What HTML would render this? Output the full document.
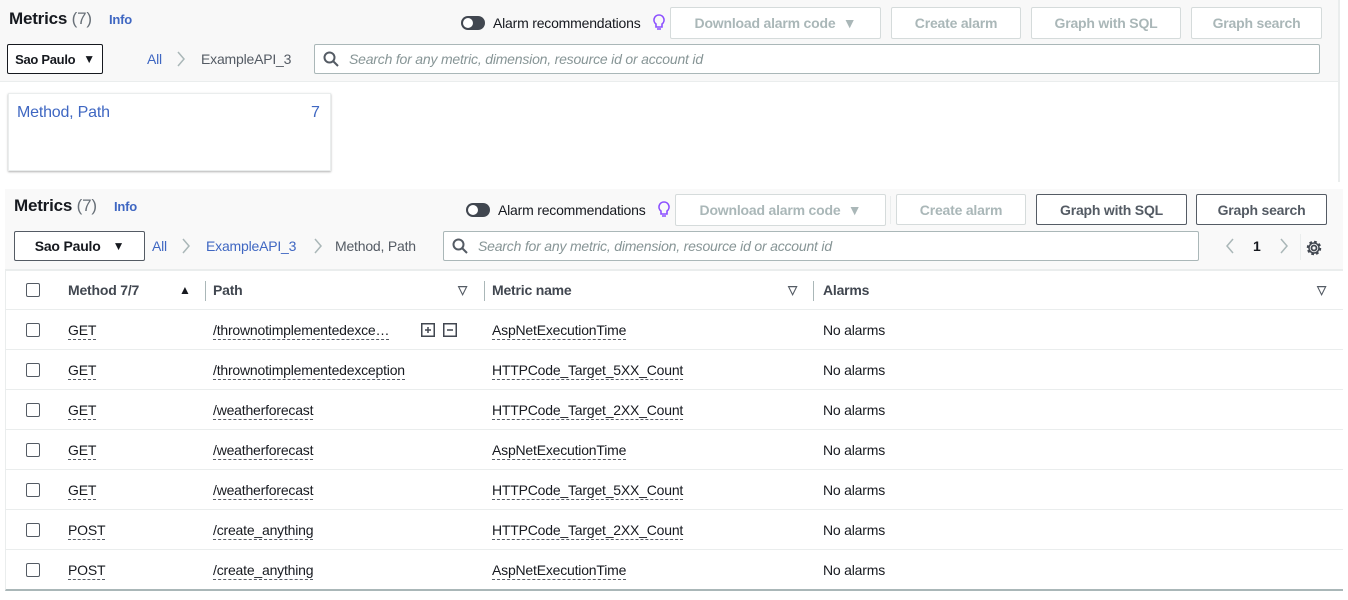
<!DOCTYPE html>
<html><head><meta charset="utf-8"><style>
*{box-sizing:border-box;margin:0;padding:0}
body{width:1348px;height:600px;background:#fff;font-family:"Liberation Sans",sans-serif;font-size:14px;color:#16191f;position:relative;overflow:hidden;letter-spacing:-0.2px}
.a{position:absolute;white-space:nowrap}
.btn{position:absolute;border:1px solid #d5dbdb;border-radius:2px;background:#fff;color:#aab7b8;font-weight:bold;font-size:14px;display:flex;align-items:center;justify-content:center;white-space:nowrap}
.btn.on{border-color:#545b64;color:#545b64}
.sel{position:absolute;border:1px solid #16191f;border-radius:2px;background:#fff;font-weight:bold;display:flex;align-items:center;justify-content:center;gap:12px;color:#16191f;white-space:nowrap}
.search{position:absolute;border:1px solid #aab7b8;border-radius:2px;background:#fff;color:#879596;font-style:italic;display:flex;align-items:center;padding-left:34px}
.tog{position:absolute;width:24px;height:14px;border-radius:7px;background:#414750}
.tog:after{content:"";position:absolute;left:2px;top:2px;width:10px;height:10px;border-radius:5px;background:#fff}
.blue{color:#3f67c2}
.cb{position:absolute;left:26px;width:14px;height:14px;border:1px solid #545b64;border-radius:2px;background:#fff}
.u{border-bottom:1px dashed #545b64;padding-bottom:1px}
.hd{font-weight:bold;color:#414750}
</style></head><body>
<!-- panel 1 -->
<div class="a" style="left:0;top:0;width:1340px;height:182px;border-right:2px solid #eaeded"></div>
<div class="a" style="left:0;top:0;width:1338px;height:82px;background:#f8f8f8;border-bottom:1px solid #eaeded"></div>
<div class="a" style="left:9px;top:9px;font-size:17px;font-weight:bold">Metrics <span style="font-weight:normal;color:#687078">(7)</span></div>
<div class="a blue" style="left:109px;top:12px;font-size:13px;font-weight:bold">Info</div>
<div class="tog" style="left:461px;top:16px"></div>
<div class="a" style="left:493px;top:15px">Alarm recommendations</div>
<svg class="a" style="left:653px;top:14px" width="12" height="18" viewBox="0 0 12 18"><path d="M6 1a5 5 0 0 0-3 9v3h6v-3a5 5 0 0 0-3-9zM4 15h4" fill="none" stroke="#8c4fff" stroke-width="1.6"/></svg>
<div class="btn" style="left:670px;top:7px;width:211px;height:32px">Download alarm code &nbsp;▼</div>
<div class="btn" style="left:891px;top:7px;width:130px;height:32px">Create alarm</div>
<div class="btn" style="left:1031px;top:7px;width:150px;height:32px">Graph with SQL</div>
<div class="btn" style="left:1191px;top:7px;width:131px;height:32px">Graph search</div>
<div class="sel" style="left:7px;top:44px;width:96px;height:30px;font-size:13px;letter-spacing:-0.3px;gap:8px">Sao Paulo <span style="font-size:12px">▼</span></div>
<div class="a blue" style="left:147px;top:51px">All</div>
<svg class="a" style="left:176px;top:51px" width="10" height="16"><path d="M2 1l6 7-6 7" fill="none" stroke="#aab7b8" stroke-width="1.5"/></svg>
<div class="a" style="left:201px;top:51px;color:#545b64">ExampleAPI_3</div>
<div class="search" style="left:314px;top:44px;width:1006px;height:30px">Search for any metric, dimension, resource id or account id</div>
<svg class="a" style="left:323px;top:51px" width="16" height="16" viewBox="0 0 16 16"><circle cx="6.5" cy="6.5" r="5" fill="none" stroke="#545b64" stroke-width="2"/><path d="M10 10l5 5" stroke="#545b64" stroke-width="2"/></svg>
<div class="a" style="left:8px;top:93px;width:323px;height:78px;border:1px solid #eaeded;box-shadow:0 1px 2px rgba(0,0,0,.3)"></div>
<div class="a blue" style="left:17px;top:104px;font-size:16px">Method, Path</div>
<div class="a blue" style="left:311px;top:104px;font-size:16px">7</div>

<!-- panel 2 -->
<div class="a" style="left:5px;top:189px;width:1338px;height:402px;border-bottom:2px solid #aab7b8;border-left:1px solid #eaeded"></div>
<div class="a" style="left:5px;top:189px;width:1338px;height:82px;background:#f9f9f9;border-bottom:2px solid #eaeded"></div>
<div class="a" style="left:14px;top:196px;font-size:17px;font-weight:bold">Metrics <span style="font-weight:normal;color:#687078">(7)</span></div>
<div class="a blue" style="left:114px;top:199px;font-size:13px;font-weight:bold">Info</div>
<div class="tog" style="left:466px;top:203px"></div>
<div class="a" style="left:498px;top:202px">Alarm recommendations</div>
<svg class="a" style="left:658px;top:201px" width="12" height="18" viewBox="0 0 12 18"><path d="M6 1a5 5 0 0 0-3 9v3h6v-3a5 5 0 0 0-3-9zM4 15h4" fill="none" stroke="#8c4fff" stroke-width="1.6"/></svg>
<div class="btn" style="left:675px;top:194px;width:211px;height:32px">Download alarm code &nbsp;▼</div>
<div class="a" style="left:890px;top:196px;width:1px;height:28px;background:#eaeded"></div>
<div class="btn" style="left:896px;top:194px;width:130px;height:31px">Create alarm</div>
<div class="btn on" style="left:1036px;top:194px;width:151px;height:31px">Graph with SQL</div>
<div class="btn on" style="left:1196px;top:194px;width:131px;height:31px">Graph search</div>
<div class="sel" style="left:14px;top:231px;width:131px;height:30px;border-color:#545b64">Sao Paulo <span style="font-size:12px">▼</span></div>
<div class="a blue" style="left:152px;top:238px">All</div>
<svg class="a" style="left:181px;top:238px" width="10" height="16"><path d="M2 1l6 7-6 7" fill="none" stroke="#aab7b8" stroke-width="1.5"/></svg>
<div class="a blue" style="left:206px;top:238px">ExampleAPI_3</div>
<svg class="a" style="left:313px;top:238px" width="10" height="16"><path d="M2 1l6 7-6 7" fill="none" stroke="#aab7b8" stroke-width="1.5"/></svg>
<div class="a" style="left:335px;top:238px;color:#545b64">Method, Path</div>
<div class="search" style="left:443px;top:231px;width:756px;height:30px">Search for any metric, dimension, resource id or account id</div>
<svg class="a" style="left:452px;top:238px" width="16" height="16" viewBox="0 0 16 16"><circle cx="6.5" cy="6.5" r="5" fill="none" stroke="#545b64" stroke-width="2"/><path d="M10 10l5 5" stroke="#545b64" stroke-width="2"/></svg>
<svg class="a" style="left:1224px;top:238px" width="12" height="16"><path d="M9 1L3 8l6 7" fill="none" stroke="#aab7b8" stroke-width="1.5"/></svg>
<div class="a" style="left:1253px;top:238px;font-weight:bold">1</div>
<svg class="a" style="left:1278px;top:238px" width="12" height="16"><path d="M3 1l6 7-6 7" fill="none" stroke="#aab7b8" stroke-width="1.5"/></svg>
<div class="a" style="left:1300px;top:234px;width:1px;height:26px;background:#eaeded"></div>
<svg class="a" style="left:1305px;top:239px" width="18" height="18" viewBox="0 0 18 18"><circle cx="9" cy="9" r="2.5" fill="none" stroke="#414750" stroke-width="1.8"/><circle cx="9" cy="9" r="6" fill="none" stroke="#414750" stroke-width="2.5" stroke-dasharray="2.6 2.1"/><circle cx="9" cy="9" r="5" fill="none" stroke="#414750" stroke-width="1.5"/></svg>

<!-- header -->
<div class="a" style="left:5px;top:309px;width:1338px;height:1px;background:#eaeded"></div>
<div class="cb" style="top:283px"></div>
<div class="a hd" style="left:68px;top:282px">Method 7/7</div>
<div class="a" style="left:179px;top:283px;font-size:12px">▲</div>
<div class="a" style="left:205px;top:281px;width:1px;height:20px;background:#aab7b8"></div>
<div class="a hd" style="left:213px;top:282px">Path</div>
<div class="a" style="left:458px;top:283px;font-size:12px;color:#545b64;font-weight:bold">▽</div>
<div class="a" style="left:484px;top:281px;width:1px;height:20px;background:#aab7b8"></div>
<div class="a hd" style="left:492px;top:282px">Metric name</div>
<div class="a" style="left:788px;top:283px;font-size:12px;color:#545b64;font-weight:bold">▽</div>
<div class="a" style="left:813px;top:281px;width:1px;height:20px;background:#aab7b8"></div>
<div class="a hd" style="left:823px;top:282px">Alarms</div>
<div class="a" style="left:1317px;top:283px;font-size:12px;color:#545b64;font-weight:bold">▽</div>

<!-- rows -->
<div class="cb" style="top:323px"></div><div class="a" style="left:68px;top:322px"><span class="u">GET</span></div><div class="a" style="left:213px;top:322px"><span class="u">/thrownotimplementedexce…</span></div>
<svg class="a" style="left:421px;top:323px" width="36" height="14"><rect x="0.75" y="0.75" width="12.5" height="12.5" fill="none" stroke="#414750" stroke-width="1.5"/><path d="M4 7h6M7 4v6" stroke="#414750" stroke-width="1.5"/><rect x="22.75" y="0.75" width="12.5" height="12.5" fill="none" stroke="#414750" stroke-width="1.5"/><path d="M26 7h6" stroke="#414750" stroke-width="1.5"/></svg>
<div class="a" style="left:492px;top:322px"><span class="u">AspNetExecutionTime</span></div><div class="a" style="left:823px;top:322px">No alarms</div>
<div class="a" style="left:5px;top:349px;width:1338px;height:1px;background:#eaeded"></div>

<div class="cb" style="top:363px"></div><div class="a" style="left:68px;top:362px"><span class="u">GET</span></div><div class="a" style="left:213px;top:362px"><span class="u">/thrownotimplementedexception</span></div><div class="a" style="left:492px;top:362px"><span class="u">HTTPCode_Target_5XX_Count</span></div><div class="a" style="left:823px;top:362px">No alarms</div>
<div class="a" style="left:5px;top:389px;width:1338px;height:1px;background:#eaeded"></div>

<div class="cb" style="top:403px"></div><div class="a" style="left:68px;top:402px"><span class="u">GET</span></div><div class="a" style="left:213px;top:402px"><span class="u">/weatherforecast</span></div><div class="a" style="left:492px;top:402px"><span class="u">HTTPCode_Target_2XX_Count</span></div><div class="a" style="left:823px;top:402px">No alarms</div>
<div class="a" style="left:5px;top:429px;width:1338px;height:1px;background:#eaeded"></div>

<div class="cb" style="top:443px"></div><div class="a" style="left:68px;top:442px"><span class="u">GET</span></div><div class="a" style="left:213px;top:442px"><span class="u">/weatherforecast</span></div><div class="a" style="left:492px;top:442px"><span class="u">AspNetExecutionTime</span></div><div class="a" style="left:823px;top:442px">No alarms</div>
<div class="a" style="left:5px;top:469px;width:1338px;height:1px;background:#eaeded"></div>

<div class="cb" style="top:483px"></div><div class="a" style="left:68px;top:482px"><span class="u">GET</span></div><div class="a" style="left:213px;top:482px"><span class="u">/weatherforecast</span></div><div class="a" style="left:492px;top:482px"><span class="u">HTTPCode_Target_5XX_Count</span></div><div class="a" style="left:823px;top:482px">No alarms</div>
<div class="a" style="left:5px;top:509px;width:1338px;height:1px;background:#eaeded"></div>

<div class="cb" style="top:523px"></div><div class="a" style="left:68px;top:522px"><span class="u">POST</span></div><div class="a" style="left:213px;top:522px"><span class="u">/create_anything</span></div><div class="a" style="left:492px;top:522px"><span class="u">HTTPCode_Target_2XX_Count</span></div><div class="a" style="left:823px;top:522px">No alarms</div>
<div class="a" style="left:5px;top:549px;width:1338px;height:1px;background:#eaeded"></div>

<div class="cb" style="top:563px"></div><div class="a" style="left:68px;top:562px"><span class="u">POST</span></div><div class="a" style="left:213px;top:562px"><span class="u">/create_anything</span></div><div class="a" style="left:492px;top:562px"><span class="u">AspNetExecutionTime</span></div><div class="a" style="left:823px;top:562px">No alarms</div>
</body></html>
